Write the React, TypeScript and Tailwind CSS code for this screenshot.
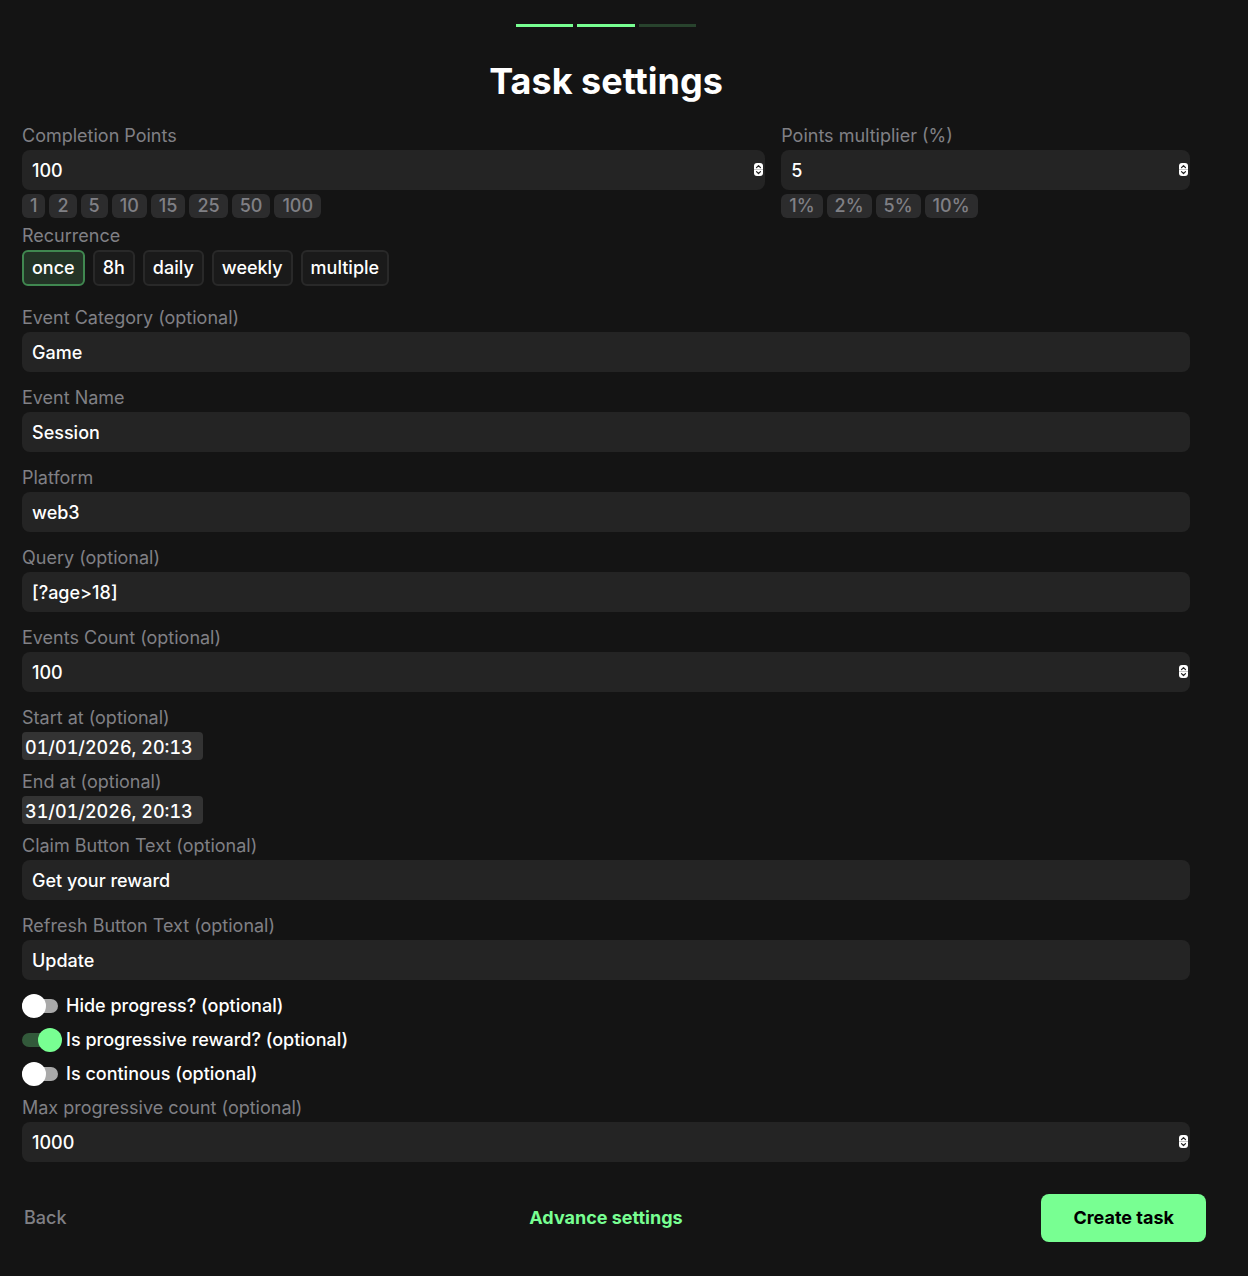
import { useState } from 'react';
import clsx from 'clsx';

const POINTS = ['1', '2', '5', '10', '15', '25', '50', '100'];
const MULTIPLIERS = ['1', '2', '5', '10'];
const RECURRENCES = ['once', '8h', 'daily', 'weekly', 'multiple'];

const labelClass = 'block text-lg leading-7 text-[#808085]';

function Spinner() {
  return (
    <svg
      width="9"
      height="13"
      viewBox="0 0 9 13"
      aria-hidden="true"
      className="pointer-events-none absolute top-[13px] right-0.5"
    >
      <rect width="9" height="13" rx="3" fill="#fff" />
      <path d="M0 6.5h9" stroke="#c8c8c8" />
      <path
        d="M2.5 4.6 4.5 2.7l2 1.9M2.5 8.6l2 1.9 2-1.9"
        fill="none"
        stroke="#222"
        strokeWidth="1.2"
        strokeLinecap="round"
        strokeLinejoin="round"
      />
    </svg>
  );
}

type FieldViewProps = {
  id: string;
  label: string;
  value: string;
  onChange: (value: string) => void;
  numeric?: boolean;
};

function FieldView({ id, label, value, onChange, numeric }: FieldViewProps) {
  return (
    <div>
      <label htmlFor={id} className={labelClass}>
        {label}
      </label>
      <div className="relative">
        <input
          id={id}
          type={numeric ? 'number' : 'text'}
          value={value}
          onChange={(e) => onChange(e.target.value)}
          className="block h-10 w-full rounded-lg bg-[#242424] px-2.5 text-lg font-medium text-white outline-none [appearance:textfield] [&::-webkit-inner-spin-button]:appearance-none"
        />
        {numeric && <Spinner />}
      </div>
    </div>
  );
}

type FieldProps = {
  id: string;
  label: string;
  initial: string;
  numeric?: boolean;
};

function Field({ id, label, initial, numeric }: FieldProps) {
  const [value, setValue] = useState(initial);
  return <FieldView id={id} label={label} value={value} onChange={setValue} numeric={numeric} />;
}

type PresetFieldProps = {
  id: string;
  label: string;
  initial: string;
  presets: string[];
  suffix?: string;
};

function PresetField({ id, label, initial, presets, suffix = '' }: PresetFieldProps) {
  const [value, setValue] = useState(initial);
  return (
    <div>
      <FieldView id={id} label={label} value={value} onChange={setValue} numeric />
      <div className="mt-1 flex flex-wrap gap-1">
        {presets.map((p) => (
          <button
            key={p}
            type="button"
            onClick={() => setValue(p)}
            className="h-6 rounded-md bg-[#2c2c2d] px-2 text-lg leading-6 font-medium text-[#808085]"
          >
            {p + suffix}
          </button>
        ))}
      </div>
    </div>
  );
}

function DateField({ id, label, initial }: { id: string; label: string; initial: string }) {
  return (
    <div>
      <label htmlFor={id} className={labelClass}>
        {label}
      </label>
      <input
        id={id}
        type="text"
        defaultValue={initial}
        className="block h-7 w-[181px] rounded bg-[#333] px-[3px] pt-0.5 text-lg leading-6 font-medium text-white tabular-nums outline-none"
      />
    </div>
  );
}

function Toggle({ label, on = false }: { label: string; on?: boolean }) {
  return (
    <label className="flex items-center gap-2 text-lg leading-7 font-medium text-white">
      <input
        type="checkbox"
        defaultChecked={on}
        className="relative h-3.5 w-9 appearance-none rounded-full bg-[#a9a9a9] before:absolute before:-top-[5px] before:left-0 before:size-6 before:rounded-full before:bg-white checked:bg-[#32593a] checked:before:left-4 checked:before:bg-[#78ff92]"
      />
      {label}
    </label>
  );
}

export default function App() {
  const [recurrence, setRecurrence] = useState('once');

  return (
    <main className="min-h-screen bg-[#141414] pt-6 pr-[42px] pb-[34px] pl-1.5 font-['Inter',sans-serif]">
      {/* Step progress */}
      <div className="mx-auto grid w-[180px] grid-cols-3 gap-1">
        <div className="h-[3px] bg-[#78ff92]" />
        <div className="h-[3px] bg-[#78ff92]" />
        <div className="h-[3px] bg-[#28432d]" />
      </div>

      <form onSubmit={(e) => e.preventDefault()}>
        <h1 className="mt-8 text-center text-4xl leading-11 font-bold text-white">Task settings</h1>

        <div className="mt-[19px] px-4">
          <div className="grid grid-cols-[20fr_11fr] gap-4">
            <PresetField id="points" label="Completion Points" initial="100" presets={POINTS} />
            <PresetField id="multiplier" label="Points multiplier (%)" initial="5" presets={MULTIPLIERS} suffix="%" />
          </div>

          <fieldset className="mt-1">
            <legend className={labelClass}>Recurrence</legend>
            <div className="flex flex-wrap gap-2">
              {RECURRENCES.map((r) => (
                <button
                  key={r}
                  type="button"
                  aria-pressed={r === recurrence}
                  onClick={() => setRecurrence(r)}
                  className={clsx(
                    'h-9 rounded-md border-2 px-2 text-lg leading-7 font-medium text-white',
                    r === recurrence ? 'border-[#408850] bg-[#233426]' : 'border-[#292929] bg-[#1a1a1a]'
                  )}
                >
                  {r}
                </button>
              ))}
            </div>
          </fieldset>

          <div className="mt-[18px] flex flex-col gap-3">
            <Field id="category" label="Event Category (optional)" initial="Game" />
            <Field id="name" label="Event Name" initial="Session" />
            <Field id="platform" label="Platform" initial="web3" />
            <Field id="query" label="Query (optional)" initial="[?age>18]" />
            <Field id="count" label="Events Count (optional)" initial="100" numeric />
            <div className="flex flex-col gap-2">
              <DateField id="start" label="Start at (optional)" initial="01/01/2026, 20:13" />
              <DateField id="end" label="End at (optional)" initial="31/01/2026, 20:13" />
              <Field id="claim" label="Claim Button Text (optional)" initial="Get your reward" />
            </div>
            <Field id="refresh" label="Refresh Button Text (optional)" initial="Update" />
            <div className="flex flex-col gap-1.5">
              <Toggle label="Hide progress? (optional)" />
              <Toggle label="Is progressive reward? (optional)" on />
              <Toggle label="Is continous (optional)" />
              <Field id="max" label="Max progressive count (optional)" initial="1000" numeric />
            </div>
          </div>
        </div>

        <div className="mt-8 grid grid-cols-3 items-center text-lg">
          <button type="button" className="justify-self-start px-[18px] font-medium text-[#808085]">
            Back
          </button>
          <button type="button" className="justify-self-center font-bold text-[#78ff92]">
            Advance settings
          </button>
          <button type="submit" className="h-12 justify-self-end rounded-lg bg-[#78ff92] px-8 font-bold text-black">
            Create task
          </button>
        </div>
      </form>
    </main>
  );
}
